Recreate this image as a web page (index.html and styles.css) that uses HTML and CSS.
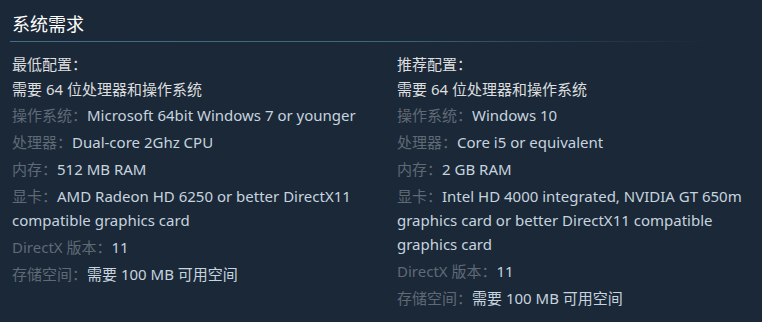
FILE: index.html
```html
<!DOCTYPE html>
<html lang="zh-CN">
<head>
<meta charset="utf-8">
<link rel="stylesheet" href="styles.css">
</head>
<body>
<div class="sysreq">
  <h2 class="title">系统需求</h2>
  <div class="cols">
    <div class="col">
      <div class="head">最低配置：</div>
      <ul class="list">
        <li class="plain">需要 64 位处理器和操作系统</li>
        <li><span class="lbl">操作系统：</span>Microsoft 64bit Windows 7 or younger</li>
        <li><span class="lbl">处理器：</span>Dual-core 2Ghz CPU</li>
        <li><span class="lbl">内存：</span>512 MB RAM</li>
        <li><span class="lbl">显卡：</span>AMD Radeon HD 6250 or better DirectX11 compatible graphics card</li>
        <li><span class="lbl">DirectX 版本：</span>11</li>
        <li><span class="lbl">存储空间：</span>需要 100 MB 可用空间</li>
      </ul>
    </div>
    <div class="col">
      <div class="head">推荐配置：</div>
      <ul class="list">
        <li class="plain">需要 64 位处理器和操作系统</li>
        <li><span class="lbl">操作系统：</span>Windows 10</li>
        <li><span class="lbl">处理器：</span>Core i5 or equivalent</li>
        <li><span class="lbl">内存：</span>2 GB RAM</li>
        <li><span class="lbl">显卡：</span>Intel HD 4000 integrated, NVIDIA GT 650m graphics card or better DirectX11 compatible graphics card</li>
        <li><span class="lbl">DirectX 版本：</span>11</li>
        <li><span class="lbl">存储空间：</span>需要 100 MB 可用空间</li>
      </ul>
    </div>
  </div>
</div>
</body>
</html>
```

FILE: styles.css
```css
html, body {
  margin: 0;
  padding: 0;
  background: #1b2838;
}
body {
  font-family: "Noto Sans", "Noto Sans CJK SC", sans-serif;
  font-size: 15px;
  color: #c6d4df;
}
.sysreq {
  padding: 12px 0 0 12px;
}
.title {
  margin: 0;
  padding: 0;
  font-size: 18px;
  font-weight: normal;
  line-height: 24px;
  color: #ffffff;
}
.title::after {
  content: "";
  display: block;
  height: 1px;
  margin-top: 5px;
  margin-left: -2px;
  width: 700px;
  background: linear-gradient(to right, #3f6f8c 0%, #3b6680 55%, rgba(59,102,128,0.35) 80%, rgba(59,102,128,0) 100%);
}
.cols {
  display: grid;
  grid-template-columns: 365px 1fr;
  column-gap: 20px;
  padding-top: 10px;
}
.head {
  color: #dcdedf;
  line-height: 24px;
  margin-bottom: 1px;
}
.list {
  list-style: none;
  margin: 0;
  padding: 0;
}
.list li {
  line-height: 24px;
  margin-bottom: 3px;
  color: #c6d4df;
}
.list li.plain {
  color: #dcdedf;
  margin-bottom: 2px;
}
.lbl {
  color: #5f6a75;
}
```
